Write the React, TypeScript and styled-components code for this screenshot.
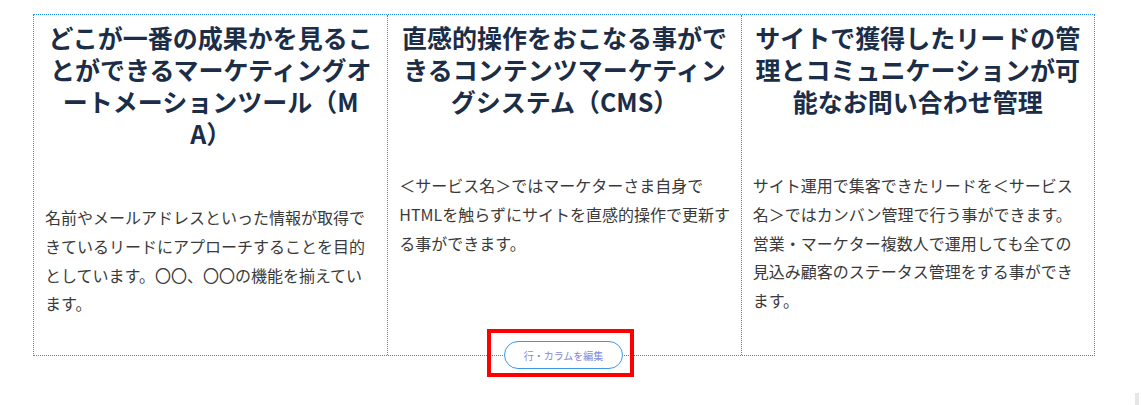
import styled, { createGlobalStyle } from "styled-components";

const GlobalStyle = createGlobalStyle`
  html, body {
    margin: 0;
    background: #ffffff;
  }
  body {
    font-family: "Noto Sans CJK JP", "Noto Sans", sans-serif;
    text-spacing-trim: space-all;
  }
`;

const StyledPage = styled.div`
  padding: 14px 0 0 33px;
  height: 405px;
  box-sizing: border-box;
  display: flex;
  flex-direction: column;
  align-items: flex-start;
`;

const StyledSection = styled.div`
  width: 1062px;
  box-sizing: border-box;
  border: 1px dotted #2191ee;
  display: grid;
  grid-template-columns: repeat(3, 1fr);
`;

const StyledColumn = styled.div<{ $first?: boolean }>`
  padding: 6px 11px 37px;
  border-left: ${(p) => (p.$first ? "none" : "1px dotted #2191ee")};
  min-width: 0;
`;

const StyledHeading = styled.h3`
  margin: 0 0 54px;
  font-size: 25px;
  line-height: 32px;
  font-weight: 700;
  color: #1b2d47;
  text-align: center;
  word-break: break-all;
`;

// the latin run "HTML" is a touch wider in this font than in the original, so that column lets its text run a few px further
const StyledBody = styled.p<{ $bleed?: number }>`
  margin: 0 ${(p) => -(p.$bleed ?? 0)}px 0 0;
  font-size: 16px;
  line-height: 28.8px;
  color: #3a3a3a;
`;

const StyledEditRow = styled.div`
  width: 1062px;
  display: flex;
  justify-content: center;
  margin-top: -27px;
`;

const StyledHighlight = styled.div`
  display: flex;
  margin-right: 7px;
  padding: 8px 7px 4px 13px;
  border: 4px solid #ff0000;
`;

const StyledEditButton = styled.button`
  width: 119px;
  height: 28px;
  border: 1px solid #3a97ea;
  border-radius: 14px;
  background: #ffffff;
  color: #8089dc;
  font-family: "Noto Sans CJK JP", sans-serif;
  font-size: 10px;
  padding: 0;
  cursor: pointer;
`;

const StyledScrollNub = styled.div`
  position: fixed;
  right: 2px;
  bottom: 0;
  width: 4px;
  height: 12px;
  background: #e6e6e6;
`;

const columns = [
  {
    title: "どこが一番の成果かを見ることができるマーケティングオートメーションツール（MA）",
    body: "名前やメールアドレスといった情報が取得できているリードにアプローチすることを目的としています。〇〇、〇〇の機能を揃えています。",
    bleed: 0,
  },
  {
    title: "直感的操作をおこなる事ができるコンテンツマーケティングシステム（CMS）",
    body: "＜サービス名＞ではマーケターさま自身でHTMLを触らずにサイトを直感的操作で更新する事ができます。",
    bleed: 4,
  },
  {
    title: "サイトで獲得したリードの管理とコミュニケーションが可能なお問い合わせ管理",
    body: "サイト運用で集客できたリードを＜サービス名＞ではカンバン管理で行う事ができます。営業・マーケター複数人で運用しても全ての見込み顧客のステータス管理をする事ができます。",
    bleed: 0,
  },
];

export default function App() {
  return (
    <StyledPage>
      <GlobalStyle />
      <StyledSection>
        {columns.map((c, i) => (
          <StyledColumn key={i} $first={i === 0}>
            <StyledHeading>{c.title}</StyledHeading>
            <StyledBody $bleed={c.bleed}>{c.body}</StyledBody>
          </StyledColumn>
        ))}
      </StyledSection>
      <StyledEditRow>
        <StyledHighlight>
          <StyledEditButton>行・カラムを編集</StyledEditButton>
        </StyledHighlight>
      </StyledEditRow>
      <StyledScrollNub />
    </StyledPage>
  );
}
